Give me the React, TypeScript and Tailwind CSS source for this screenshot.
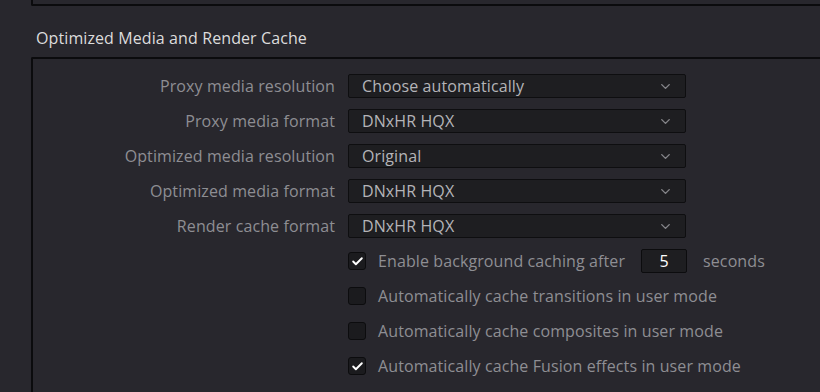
import { ChevronDown, Check } from "lucide-react";

const selects = [
  { label: "Proxy media resolution", value: "Choose automatically" },
  { label: "Proxy media format", value: "DNxHR HQX" },
  { label: "Optimized media resolution", value: "Original" },
  { label: "Optimized media format", value: "DNxHR HQX" },
  { label: "Render cache format", value: "DNxHR HQX" },
];

function Checkbox({ checked }: { checked: boolean }) {
  return (
    <div className="w-[18px] h-[18px] rounded-[3px] bg-[#1b1b1e] border border-[#0c0c0e] flex items-center justify-center shrink-0">
      {checked && <Check className="w-[13px] h-[13px] text-white" strokeWidth={3.5} />}
    </div>
  );
}

export default function App() {
  return (
    <div className="w-[820px] h-[392px] overflow-hidden bg-[#28272d] font-['Open_Sans',sans-serif] text-[16px] tracking-[0.1px]">
      {/* previous panel, cut off at top */}
      <div className="ml-[31px] h-[6px] border-l-2 border-b-2 border-[#0b0b0d] rounded-bl-[2px]" />

      <div className="pl-[36px] pt-[22px] h-[51px] text-[#dcdcdc] leading-[20px]">
        Optimized Media and Render Cache
      </div>

      <div className="ml-[31px] border-l-2 border-t-2 border-[#0b0b0d] rounded-tl-[2px] pt-[15px] h-[400px]">
        <div className="flex flex-col gap-[11px]">
          {selects.map((s) => (
            <div key={s.label} className="flex items-center h-[24px]">
              <div className="w-[302px] text-right text-[#8e8e93]">{s.label}</div>
              <div className="ml-[13px] w-[338px] h-[24px] bg-[#1e1e21] border border-[#0e0e10] rounded-[2px] flex items-center justify-between pl-[13px] pr-[12px] text-[#b4b4b8]">
                <span>{s.value}</span>
                <ChevronDown className="w-[15px] h-[15px] text-[#86868a]" strokeWidth={2.25} />
              </div>
            </div>
          ))}

          <div className="flex items-center h-[24px] pl-[315px] text-[#8e8e93]">
            <Checkbox checked />
            <span className="ml-[12px]">Enable background caching after</span>
            <div className="ml-[16px] w-[46px] h-[24px] bg-[#1e1e21] border border-[#0c0c0e] rounded-[2px] flex items-center justify-center text-white">
              5
            </div>
            <span className="ml-[16px]">seconds</span>
          </div>
          <div className="flex items-center h-[24px] pl-[315px] text-[#8e8e93]">
            <Checkbox checked={false} />
            <span className="ml-[12px]">Automatically cache transitions in user mode</span>
          </div>
          <div className="flex items-center h-[24px] pl-[315px] text-[#8e8e93]">
            <Checkbox checked={false} />
            <span className="ml-[12px]">Automatically cache composites in user mode</span>
          </div>
          <div className="flex items-center h-[24px] pl-[315px] text-[#8e8e93]">
            <Checkbox checked />
            <span className="ml-[12px]">Automatically cache Fusion effects in user mode</span>
          </div>
        </div>
      </div>
    </div>
  );
}
